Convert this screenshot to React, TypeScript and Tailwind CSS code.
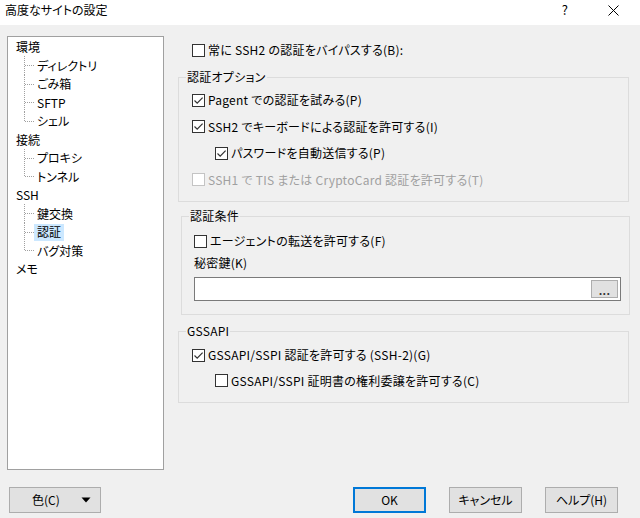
import React from "react";

function Box({ checked, disabled }: { checked?: boolean; disabled?: boolean }) {
  return (
    <span
      className={`w-[13px] h-[13px] shrink-0 border bg-white flex items-center justify-center ${
        disabled ? "border-[#c4c4c4]" : "border-[#333333]"
      }`}
    >
      {checked && (
        <svg width="11" height="11" viewBox="0 0 11 11">
          <path d="M1.5 5.5 L4.2 8.2 L9.6 2.6" fill="none" stroke="#333333" strokeWidth="1.2" />
        </svg>
      )}
    </span>
  );
}

function Check({
  label,
  checked,
  disabled,
  className = "",
}: {
  label: string;
  checked?: boolean;
  disabled?: boolean;
  className?: string;
}) {
  return (
    <div className={`flex items-center gap-[3px] ${className}`}>
      <Box checked={checked} disabled={disabled} />
      <span className={`whitespace-nowrap ${disabled ? "text-[#a0a0a0]" : "text-black"}`}>{label}</span>
    </div>
  );
}

const tree: { label: string; children: string[] }[] = [
  { label: "環境", children: ["ディレクトリ", "ごみ箱", "SFTP", "シェル"] },
  { label: "接続", children: ["プロキシ", "トンネル"] },
  { label: "SSH", children: ["鍵交換", "認証", "バグ対策"] },
  { label: "メモ", children: [] },
];

function Connector({ last }: { last: boolean }) {
  return (
    <svg className="ml-[8px] shrink-0" width="10" height="19" viewBox="0 0 10 19">
      <line x1="0.5" y1="0" x2="0.5" y2={last ? 9.5 : 19} stroke="#a0a0a0" strokeWidth="1" strokeDasharray="1 1" />
      <line x1="1" y1="9.5" x2="10" y2="9.5" stroke="#a0a0a0" strokeWidth="1" strokeDasharray="1 1" />
    </svg>
  );
}

function Tree() {
  return (
    <div className="w-[157px] h-[434px] border border-[#a0a0a0] bg-white pt-[1px] pl-[8px]">
      {tree.map((node) => (
        <div key={node.label}>
          <div className="h-[18.5px] flex items-center">{node.label}</div>
          {node.children.map((c, i) => {
            const last = i === node.children.length - 1;
            const sel = c === "認証";
            return (
              <div key={c} className="h-[18.5px] flex items-center overflow-visible">
                <Connector last={last} />
                <span className={`px-[3px] h-[17px] flex items-center ${sel ? "bg-[#cce8ff]" : ""}`}>{c}</span>
              </div>
            );
          })}
        </div>
      ))}
    </div>
  );
}

function Group({
  label,
  className = "",
  children,
}: {
  label: string;
  className?: string;
  children: React.ReactNode;
}) {
  return (
    <div className={`relative border border-[#dcdcdc] ${className}`}>
      <span className="absolute -top-[9px] left-[7px] px-[1px] bg-[#f0f0f0] leading-[16px]">{label}</span>
      {children}
    </div>
  );
}

function Btn({ children, primary, className = "" }: { children: React.ReactNode; primary?: boolean; className?: string }) {
  return (
    <div
      className={`h-[26px] bg-[#e1e1e1] flex items-center justify-center ${
        primary ? "border-2 border-[#0078d7]" : "border border-[#adadad]"
      } ${className}`}
    >
      {children}
    </div>
  );
}

export default function App() {
  return (
    <div className="w-[640px] h-[518px] bg-[#f0f0f0] flex flex-col text-[12px] text-black font-['Noto_Sans_CJK_JP',sans-serif] [font-feature-settings:'palt'] overflow-hidden">
      <div className="h-[25px] bg-white flex items-start pt-[2px] pl-[5px] leading-[16px]">
        <span>高度なサイトの設定</span>
        <span className="ml-auto mr-[40px] text-[13px]">?</span>
        <svg className="mr-[21px] mt-[3px]" width="11" height="11" viewBox="0 0 11 11">
          <path d="M0.5 0.5 L10.5 10.5 M10.5 0.5 L0.5 10.5" stroke="#000" strokeWidth="1" />
        </svg>
      </div>

      <div className="flex pl-[7px] pt-[11px]">
        <Tree />
        <div className="ml-[14px] w-[452px] flex flex-col tracking-[0.25px]">
          <div className="h-[28px] flex items-center pl-[14px]">
            <Check label="常に SSH2 の認証をバイパスする(B):" />
          </div>

          <Group label="認証オプション" className="mt-[13px] w-[451px] h-[125px] pt-[9px] pl-[13px]">
            <div className="h-[26.5px] flex items-center">
              <Check label="Pagent での認証を試みる(P)" checked />
            </div>
            <div className="h-[26.5px] flex items-center">
              <Check label="SSH2 でキーボードによる認証を許可する(I)" checked />
            </div>
            <div className="h-[26.5px] flex items-center pl-[23px]">
              <Check label="パスワードを自動送信する(P)" checked />
            </div>
            <div className="h-[26.5px] flex items-center">
              <Check label="SSH1 で TIS または CryptoCard 認証を許可する(T)" disabled />
            </div>
          </Group>

          <Group label="認証条件" className="mt-[14px] ml-[3px] w-[449px] h-[99px] pt-[13px] pl-[12px]">
            <div className="h-[22px] flex items-center">
              <Check label="エージェントの転送を許可する(F)" />
            </div>
            <div className="h-[22px] flex items-center">秘密鍵(K)</div>
            <div className="mt-[3px] w-[427px] h-[24px] bg-white border border-[#7a7a7a] flex items-center justify-end pr-[2px]">
              <div className="w-[27px] h-[18px] bg-[#e1e1e1] border border-[#adadad] flex items-end justify-center text-[11px] leading-[14px] font-bold text-[#333]">
                ...
              </div>
            </div>
          </Group>

          <Group label="GSSAPI" className="mt-[16px] w-[451px] h-[72px] pt-[11px] pl-[13px]">
            <div className="h-[24px] flex items-center">
              <Check label="GSSAPI/SSPI 認証を許可する (SSH-2)(G)" checked />
            </div>
            <div className="h-[27px] flex items-center pl-[23px]">
              <Check label="GSSAPI/SSPI 証明書の権利委譲を許可する(C)" />
            </div>
          </Group>
        </div>
      </div>

      <div className="flex mt-[17px] pl-[9px] pr-[22px]">
        <Btn className="w-[92px] justify-start pl-[22px]">
          <span>色(C)</span>
          <svg className="ml-[21px]" width="10" height="6" viewBox="0 0 10 6">
            <path d="M0.5 0.5 L9.5 0.5 L5 5.5 Z" fill="#000" />
          </svg>
        </Btn>
        <div className="ml-auto flex gap-[23px]">
          <Btn primary className="w-[73px]">OK</Btn>
          <Btn className="w-[73px]">キャンセル</Btn>
          <Btn className="w-[73px]">ヘルプ(H)</Btn>
        </div>
      </div>
    </div>
  );
}
